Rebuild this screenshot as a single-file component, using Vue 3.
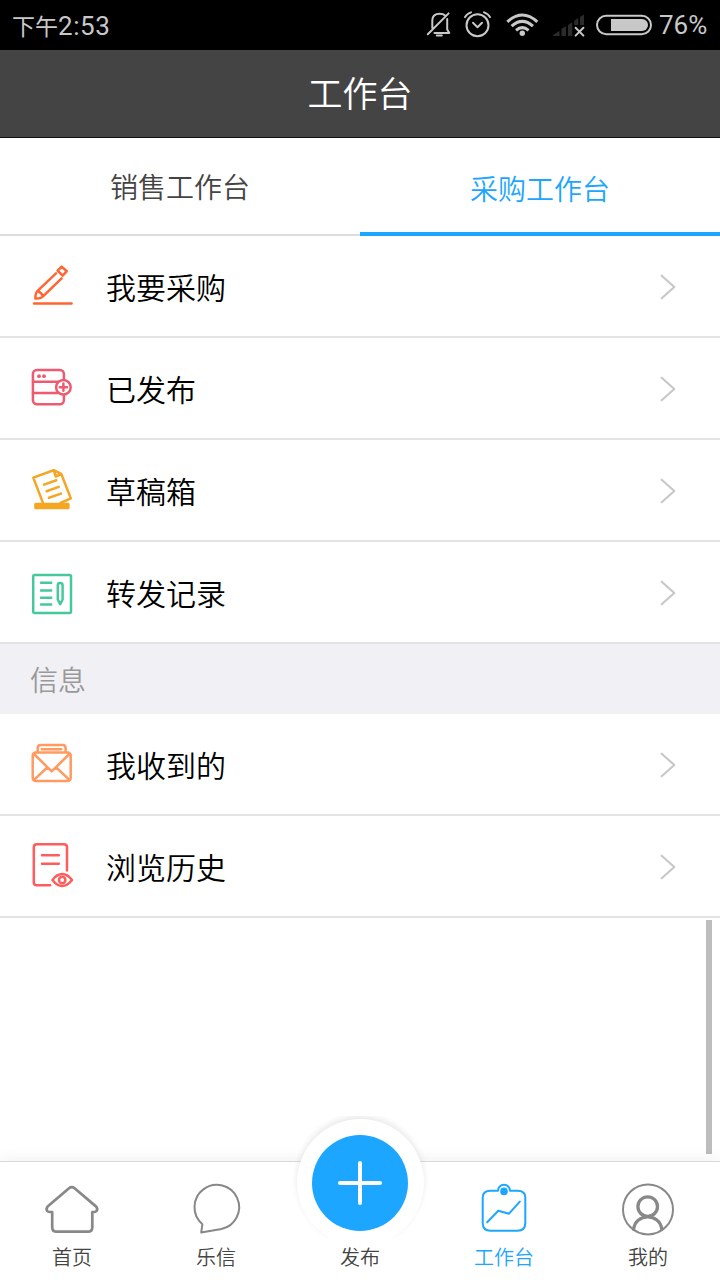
<template>
  <div class="page">
    <div class="status">
      <div class="time"><span class="period">下午</span>2:53</div>
      <div class="status-icons">
        <svg class="bell" viewBox="426 10 26 30">
          <path d="M432.3 28V20.5C432.3 16 435.5 13.8 439.8 13.8C442.5 13.8 444 14.5 445 15.5M447.2 19V29.5L449.3 33H434.5M427.8 34.2L448.6 13.4" />
          <path d="M436.8 35.6H441.8" />
        </svg>
        <svg class="alarm" viewBox="463 10 29 30">
          <circle cx="477.5" cy="25.3" r="11" />
          <path d="M465 17.2Q466.5 14 471 12.4M490 17.2Q488.5 14 484 12.4M473 22.8L477.5 27.2L482 22.8" />
        </svg>
        <svg class="wifi" viewBox="505 10 35 30">
          <path d="M507.3 21.8Q522.3 8.2 537.3 21.8M511.6 26.2Q522.3 16.6 533 26.2M516 30.3Q522.3 25 528.6 30.3" />
          <circle cx="522.3" cy="33.3" r="2.7" />
        </svg>
        <svg class="signal" viewBox="552 10 34 30">
          <path class="bars" d="M553 36V35L559.5 31V36ZM561.5 36V28.8L566 26.3V36ZM568 36V25L572.3 22.3V36ZM574.3 25V20.8L578.3 18V25ZM580 25V17L584 14.5V25Z" />
          <path class="cross" d="M575.6 27.8L583.4 35.6M583.4 27.8L575.6 35.6" />
        </svg>
        <svg class="battery" viewBox="595 10 58 30">
          <rect x="597" y="15.8" width="54" height="18.4" rx="9.2" />
          <path d="M611 19H642A6 6 0 0 1 642 31H611Z" />
        </svg>
        <span class="percent">76%</span>
      </div>
    </div>

    <header class="title">工作台</header>

    <div class="tabs">
      <div
        v-for="tab in tabs"
        :key="tab"
        class="tab"
        :class="{ active: tab === activeTab }"
        @click="activeTab = tab"
      >{{ tab }}</div>
    </div>

    <main class="content">
      <template v-for="group in groups" :key="group.title">
        <div v-if="group.title" class="section">{{ group.title }}</div>
        <div v-for="item in group.items" :key="item.name" class="row">
          <svg class="icon" :class="item.icon" viewBox="0 0 48 48">
            <g v-if="item.icon === 'pencil'">
              <path d="M33.7 4.6L38.8 9.2L34.7 13.6L29.6 8.7ZM28 11.3L9.6 28.8Q7.8 30.6 7.6 33L7.3 36.4L11 36.2Q13.4 36 15 34.4L33.6 16.3M9.8 29.2Q13.6 30.4 14.8 34.2M6 41.4H43.6" />
            </g>
            <g v-else-if="item.icon === 'published'">
              <rect x="4.9" y="6" width="31" height="34.3" rx="4" />
              <path d="M5 17.8H36M5 29H30" />
              <circle class="cover" cx="35.4" cy="23.2" r="7.3" />
              <path d="M31.8 23.2H39M35.4 19.6V26.8" />
              <circle class="solid" cx="11" cy="12.2" r="1.9" />
              <circle class="solid" cx="16" cy="12.2" r="1.9" />
            </g>
            <g v-else-if="item.icon === 'draft'">
              <path d="M15 37L5.3 11.6L25.7 4.2L33.2 7.8L42.8 32.4L32.5 37M25.7 4.2L27.8 10.5L33.2 8M16 18.6L28.3 14.3M18.6 25.2L30.7 20.9M21 31.8L33 27.6" />
              <rect class="solid" x="6.2" y="36.8" width="35.4" height="6.4" rx="1.5" />
            </g>
            <g v-else-if="item.icon === 'record'">
              <rect x="5.2" y="7.1" width="37.8" height="38" rx="1.5" />
              <path d="M13 14.8H23.2M13 22.4H23.2M13 29.8H23.2M13 36.6H23.2M29.8 17.2Q29.8 15 32.2 15Q34.6 15 34.6 17.2V31.5L32.2 36.2L29.8 31.5Z" />
            </g>
            <g v-else-if="item.icon === 'mail'">
              <rect x="4.7" y="12.6" width="38" height="28.4" rx="3" />
              <path d="M9.7 12V8Q9.7 5 12.7 5H34.6Q37.6 5 37.6 8V12M13.8 9.2H33.2M6 14L23.7 31.4L41.4 14M6 39.8L19.2 27.5M41.4 39.8L28.2 27.5" />
            </g>
            <g v-else>
              <path d="M39 28.6V5.3Q39 2.2 36 2.2H8.8Q5.8 2.2 5.8 5.3V40.2Q5.8 43.3 8.8 43.3H22.2M14 13.2H30.8M14 21.7H30.8" />
              <path d="M24.4 38Q29 32 34.2 32T44 38Q39.2 44 34.2 44T24.4 38Z" />
              <circle cx="34.2" cy="38" r="3.2" />
            </g>
          </svg>
          <span class="name">{{ item.name }}</span>
          <svg class="arrow" viewBox="0 0 16 26"><path d="M1.7 1.7L14.3 13L1.7 24.3" /></svg>
        </div>
      </template>
      <div class="scrollbar"></div>
    </main>

    <footer class="nav">
      <div class="nav-item">
        <svg viewBox="0 0 56 56">
          <path d="M25 7.2Q27.8 5 30.6 7.2L52.2 25.6Q54 27.6 52.6 30Q51.7 31.2 48.3 31.2V46.2Q48.3 50.7 43.8 50.7H12.7Q8.2 50.7 8.2 46.2V31.2Q4.2 31.2 3.2 30Q1.8 27.6 3.6 25.6Z" />
        </svg>
        <span>首页</span>
      </div>
      <div class="nav-item">
        <svg class="thin" viewBox="0 0 56 56">
          <path d="M14.4 43.2A22.3 22.3 0 1 1 33.4 48L13.2 51.4Z" />
        </svg>
        <span>乐信</span>
      </div>
      <div class="nav-item publish">
        <div class="halo">
          <div class="ring">
            <svg class="plus" viewBox="0 0 96 96"><path d="M28 48H68M48 28V68" /></svg>
          </div>
        </div>
        <span>发布</span>
      </div>
      <div class="nav-item active">
        <svg class="thin" viewBox="0 0 56 56">
          <path d="M22 9.8H14.6Q6.7 9.8 6.7 16.5V42Q6.7 49.7 14.6 49.7H41.4Q49.3 49.7 49.3 42V16.5Q49.3 9.8 41.4 9.8H34A6 6 0 0 0 22 9.8ZM11.2 41.2L22.3 29.8L33 32.7L43.8 20.6" />
          <circle class="solid" cx="28" cy="10.4" r="3.8" />
        </svg>
        <span>工作台</span>
      </div>
      <div class="nav-item">
        <svg viewBox="0 0 56 56">
          <circle class="outline" cx="28" cy="28.4" r="25" />
          <circle class="thick" cx="27.7" cy="25.6" r="9.8" />
          <path class="thick" d="M13.6 48.4C15.4 31.6 40 31.6 41.8 48.4" />
        </svg>
        <span>我的</span>
      </div>
    </footer>
  </div>
</template>

<script setup>
import { ref } from 'vue';

const tabs = ['销售工作台', '采购工作台'];
const activeTab = ref('采购工作台');

const groups = [
  {
    title: '',
    items: [
      { name: '我要采购', icon: 'pencil' },
      { name: '已发布', icon: 'published' },
      { name: '草稿箱', icon: 'draft' },
      { name: '转发记录', icon: 'record' }
    ]
  },
  {
    title: '信息',
    items: [
      { name: '我收到的', icon: 'mail' },
      { name: '浏览历史', icon: 'history' }
    ]
  }
];
</script>

<style>
body {
  margin: 0;
  background: #fff;
}
</style>

<style scoped>
.page {
  display: flex;
  flex-direction: column;
  width: 720px;
  height: 1280px;
  overflow: hidden;
  background: #fff;
  font-family: "Noto Sans CJK SC", sans-serif;
  font-weight: 350;
}

svg {
  display: block;
  fill: none;
  stroke: currentColor;
  stroke-linecap: round;
  stroke-linejoin: round;
}

.status {
  display: flex;
  justify-content: space-between;
  align-items: center;
  height: 50px;
  padding: 0 12px;
  box-sizing: border-box;
  background: #000;
  color: #c8c8c8;
  font: 26px/50px Roboto, "Noto Sans CJK SC", sans-serif;
}

.time {
  padding-top: 4px;
  letter-spacing: 0.6px;
}

.period {
  font-size: 23px;
  letter-spacing: 0;
}

.status-icons {
  display: flex;
  align-items: center;
}

.status-icons svg {
  height: 30px;
  stroke-width: 2;
}

.bell {
  width: 26px;
}

.alarm {
  width: 29px;
  margin-left: 11px;
}

.wifi {
  width: 35px;
  margin-left: 13px;
}

.status-icons .wifi {
  stroke-width: 3;
  stroke-linecap: butt;
}

.wifi circle,
.battery path {
  fill: currentColor;
  stroke: none;
}

.signal {
  width: 34px;
  margin-left: 12px;
}

.signal .bars {
  fill: #2b2b2b;
  stroke: none;
}

.battery {
  width: 58px;
  margin-left: 9px;
}

.percent {
  width: 49px;
  margin-left: 6px;
}

.title {
  height: 87px;
  border-bottom: 1px solid #111;
  background: #444;
  color: #fff;
  font-size: 35px;
  line-height: 84px;
  text-align: center;
}

.tabs {
  display: flex;
  height: 98px;
}

.tab {
  flex: 1;
  box-sizing: border-box;
  border-bottom: 2px solid #dcdcdc;
  color: #444;
  font-size: 28px;
  line-height: 96px;
  text-align: center;
}

.tab.active {
  border-bottom: 4px solid #1ca6ff;
  color: #1ca6ff;
  line-height: 100px;
}

.content {
  position: relative;
  flex: 1;
}

.row {
  display: flex;
  align-items: center;
  height: 100px;
  padding: 0 44px 0 28px;
  border-bottom: 2px solid #e3e3e3;
}

.icon {
  width: 48px;
  height: 48px;
  stroke-width: 2.5;
}

.pencil {
  color: #ff6632;
}

.published {
  color: #ee5a6f;
}

.draft {
  color: #f5a623;
}

.record {
  color: #45c99b;
}

.mail {
  color: #ff9a60;
}

.history {
  color: #ff5c5c;
}

.solid {
  fill: currentColor;
  stroke: none;
}

.cover {
  fill: #fff;
}

.name {
  flex: 1;
  margin-left: 30px;
  color: #000;
  font-size: 30px;
  line-height: 100px;
}

.arrow {
  width: 16px;
  height: 26px;
  margin-top: 2px;
  color: #c8c8c8;
  stroke-width: 2.2;
}

.section {
  height: 70px;
  padding-left: 30px;
  background: #f0f0f5;
  color: #999;
  font-size: 28px;
  line-height: 71px;
}

.scrollbar {
  position: absolute;
  top: 684px;
  right: 8px;
  width: 6px;
  height: 234px;
  background: #bdbdbd;
}

.nav {
  position: relative;
  display: flex;
  height: 118px;
  border-top: 1px solid #d9d9d9;
  background: #fff;
  box-shadow: 0 -2px 14px rgba(0, 0, 0, 0.06);
}

.nav-item {
  display: flex;
  flex: 1;
  flex-direction: column;
  align-items: center;
  padding-top: 19px;
  color: #888;
}

.nav-item > svg {
  width: 56px;
  height: 56px;
  stroke-width: 2.7;
}

.nav-item > .thin {
  stroke-width: 2;
}

.outline {
  stroke-width: 2;
}

.thick {
  stroke-width: 3.3;
}

.nav-item span {
  color: #444;
  font-size: 20px;
  line-height: 40px;
}

.nav-item.active,
.nav-item.active span {
  color: #1ca6ff;
}

.publish {
  position: relative;
  padding-top: 75px;
}

/* raised button, only its upper shadow shows */
.halo {
  position: absolute;
  top: -46px;
  left: 0;
  display: flex;
  justify-content: center;
  width: 144px;
  height: 122px;
  padding-top: 3px;
  box-sizing: border-box;
  overflow: hidden;
}

.ring {
  display: flex;
  flex-shrink: 0;
  align-items: center;
  justify-content: center;
  width: 127px;
  height: 127px;
  border-radius: 50%;
  background: #fff;
  box-shadow: 0 -3px 6px rgba(0, 0, 0, 0.09);
}

.plus {
  width: 96px;
  height: 96px;
  border-radius: 50%;
  background: #1ca6ff;
  color: #fff;
  stroke-width: 4;
}
</style>
